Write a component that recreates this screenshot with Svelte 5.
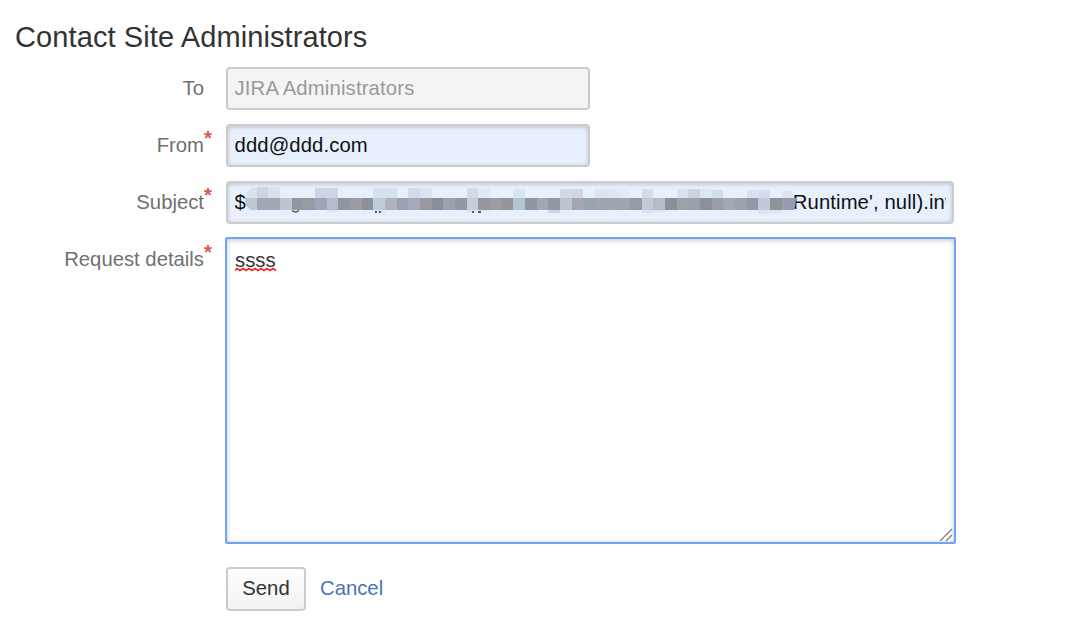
<script>
  const mid = ['bfc6d2','a0a7b6','a0a7b5','bfc6d1','92969f','989ba3','9ca6b8','b3bcc8','9095a1','9b9ca1','8b909d','bfcdd9','b0b2bf','9ba2ac','a2aabb','97999e','8a8f9e','9ba3af','9398a5','c8cdda','98969f','989ea8','949599','b1c4d4','9095a2','a0a7b5','9299a4','bbc4cf','a5a4b0','9ba2b1','a1a4b0','9fa6b0','9fa4b1','969ba5','c4cbd8','b3bdc9','8b8f97','9ba2a8','97a2ad','8e8f9b','999da6','a0a9b3','9aa3ad','929aa5','c3cad7','8f9297','969cac'];
  // column, top, colour
  const upper = [
    [0,9,'d9e0ed'],[1,8,'cdd4e2'],[2,8,'d9e1ee'],[6,9,'cdd5e2'],[7,9,'cfd6e2'],[11,9,'d7e0ee'],[12,9,'d7e0ee'],
    [14,9,'d3dbe9'],[15,9,'dbe3f1'],[19,9,'d3d9e7'],[20,10,'e0e7f5'],[23,10,'dae5f2'],
    [27,10,'d3dae7'],[28,10,'ced5e3'],[30,10,'dce4f1'],[31,10,'dde7f4'],[32,10,'e1eaf8'],[34,10,'d5dbe9'],
    [37,10,'dae2ef'],[38,10,'cdd4e1'],[39,10,'dce7f4'],[40,11,'d5dce9'],[43,11,'dae2ef'],[44,11,'d5dcec'],[46,12,'dde3f0']
  ];
  const lower = [[7,2,'dce4f2'],[11,2,'dce5f2'],[19,2,'d8deeb'],[20,1,'dfe6f4'],[26,3,'ced6e4'],[34,3,'dae1ef'],[35,2,'dce4f2'],[44,4,'dce3f1'],[45,3,'dce3f1']];
  const pos = (i) => i * 11.67;
</script>

<form class="page" onsubmit={(e) => e.preventDefault()}>
  <h1>Contact Site Administrators</h1>
  <div class="row"><span class="label">To</span><div class="field short disabled">JIRA Administrators</div></div>
  <div class="row"><span class="label">From<i>*</i></span><div class="field short filled">ddd@ddd.com</div></div>
  <div class="row">
    <span class="label">Subject<i>*</i></span>
    <div class="field filled subject">
      <span class="clip"><span>$</span><span class="tail">Runtime', null).inv</span></span>
      <svg class="mosaic" width="552" height="36" viewBox="0 0 552 36">
        <defs><clipPath id="brush"><path d="M12 0H535Q551 8 551 19Q551 26 549 31V36H12V31H7Q0 29 0 20Q0 9 12 8Z" /></clipPath></defs>
        <g clip-path="url(#brush)" shape-rendering="crispEdges">
          {#each upper as [i, y, c]}<rect x={pos(i)} {y} width="11.67" height={20 - y} fill={'#' + c} />{/each}
          {#each lower as [i, h, c]}<rect x={pos(i)} y="31" width="11.67" height={h} fill={'#' + c} />{/each}
          {#each mid as c, i}<rect x={pos(i)} y="19" width={i === 46 ? 14 : 11.7} height="12" fill={'#' + c} />{/each}
        </g>
        <path d="M47 31.5Q50.5 34.5 54 31.5" fill="none" stroke="#4d515b" stroke-width="1.3" />
        <path d="M130 32h2v2h-2zM134 32h2v2h-2zM227 32h2v2h-2zM233 32h3v2h-3z" fill="#535b6b" />
      </svg>
    </div>
  </div>
  <div class="row details">
    <span class="label">Request details<i>*</i></span>
    <div class="area">
      <span class="typed">ssss<svg width="42" height="5" viewBox="0 0 42 5"><path d="M0 3.5L2 1.5L5 3.5L8 1.5L11 3.5L14 1.5L17 3.5L20 1.5L23 3.5L26 1.5L29 3.5L32 1.5L35 3.5L38 1.5L41 3.5" fill="none" stroke="#f22" stroke-width="1.6" /></svg></span>
      <svg class="grip" width="14" height="14" viewBox="0 0 14 14"><path d="M1 13L13 1M7 13L13 7" fill="none" stroke="#777" stroke-width="1.1" /></svg>
    </div>
  </div>
  <div class="actions"><button>Send</button><a href="#cancel">Cancel</a></div>
</form>

<style>
  :global(body) { background: #fff; }
  .page { box-sizing: border-box; width: 1080px; height: 641px; padding: 20px 0 0 15px; overflow: hidden; font: 20.3px/24px "Liberation Sans", Arial, sans-serif; color: #333; }
  h1 { margin: 0 0 12px; font-size: 29px; line-height: 35px; font-weight: 400; letter-spacing: .1px; }
  .row { display: flex; height: 43px; margin-bottom: 14px; }
  .label { position: relative; box-sizing: border-box; width: 189px; margin-right: 22px; padding-top: 9px; text-align: right; color: #707070; white-space: nowrap; }
  .label i { position: absolute; left: 100%; top: 2px; font-style: normal; font-weight: 700; color: #d9574c; }
  .field { position: relative; box-sizing: border-box; width: 729px; height: 43px; padding: 7px 6.5px; border: 2px solid #ccc; border-radius: 4px; color: #111; white-space: nowrap; }
  .short { width: 364px; letter-spacing: .1px; }
  .disabled { background: #f4f4f4; color: #999; letter-spacing: .16px; }
  .filled { background: #e8effd; box-shadow: inset 0 1px 4px rgba(0,0,0,.2); }
  .subject { width: 728px; }
  .clip { display: flex; overflow: hidden; }
  .tail { margin-left: 547px; letter-spacing: .1px; }
  .mosaic { position: absolute; left: 16.5px; top: -4px; }
  .details { height: 307px; margin: -1px 0 23px; }
  .details .label { padding-top: 10px; }
  .details .label i { top: 3px; }
  .area { position: relative; box-sizing: border-box; width: 731px; height: 307px; margin-left: -1px; padding: 9px 8px; border: 2px solid #6ea3f7; border-radius: 2px; box-shadow: inset 0 1px 5px rgba(0,0,0,.24); }
  .typed { position: relative; }
  .typed svg { position: absolute; left: 0; bottom: -1px; }
  .grip { position: absolute; right: 1px; bottom: 0; }
  .actions { display: flex; align-items: center; gap: 14px; padding-left: 211px; }
  button { box-sizing: border-box; width: 80px; height: 44px; padding: 0 0 2px; border: 2px solid #ccc; border-radius: 4px; background: linear-gradient(#fff, #f2f2f2); color: #333; font: inherit; }
  a { margin-top: -2px; color: #4a74b4; text-decoration: none; }
</style>
